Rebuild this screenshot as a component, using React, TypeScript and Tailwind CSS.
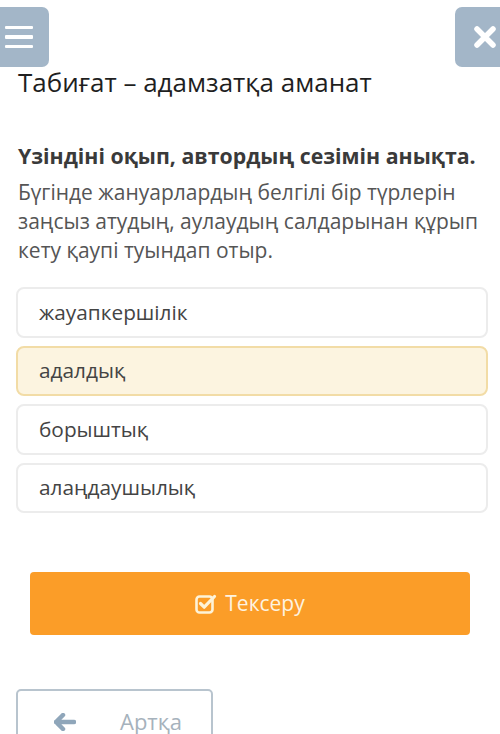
import React from "react";

export default function App() {
  const options = ["жауапкершілік", "адалдық", "борыштық", "алаңдаушылық"];
  return (
    <div className="relative w-[500px] h-[734px] overflow-hidden bg-white" style={{ fontFamily: '"Open Sans", "Noto Sans", sans-serif' }}>
      <div className="absolute left-[-8px] top-[7px] w-[57px] h-[60px] rounded-[7px] bg-[#a3b6c8] flex items-center justify-center">
        <div className="flex flex-col gap-[6px] ml-[-4px]">
          <div className="w-[28px] h-[3.5px] bg-white rounded-[1px]" />
          <div className="w-[28px] h-[3.5px] bg-white rounded-[1px]" />
          <div className="w-[28px] h-[3.5px] bg-white rounded-[1px]" />
        </div>
      </div>
      <div className="absolute left-[455px] top-[7px] w-[60px] h-[60px] rounded-[7px] bg-[#a3b6c8] flex items-center pl-[18px]">
        <svg width="24" height="24" viewBox="0 0 24 24">
          <path d="M4 4 L20 20 M20 4 L4 20" stroke="white" strokeWidth="5.5" strokeLinecap="round" />
        </svg>
      </div>

      <div className="pt-[64px] px-[18px]">
        <h1 className="text-[26px] leading-[36px] text-[#1f1f1f] font-normal whitespace-nowrap">Табиғат – адамзатқа аманат</h1>
        <p className="mt-[42px] text-[21.3px] leading-[28px] font-bold text-[#3a3a3a] whitespace-nowrap">Үзіндіні оқып, автордың сезімін анықта.</p>
        <p className="mt-[8px] text-[21px] leading-[29px] text-[#555] whitespace-nowrap">
          Бүгінде жануарлардың белгілі бір түрлерін
          <br />
          заңсыз атудың, аулаудың салдарынан құрып
          <br />
          кету қаупі туындап отыр.
        </p>
      </div>

      <div className="mt-[22px] mx-[16px] w-[472px] flex flex-col gap-[8px]">
        {options.map((o, i) => (
          <div
            key={o}
            className={
              i === 1
                ? "h-[50.5px] rounded-[8px] border-2 border-[#f2dca6] bg-[#fcf4e0] flex items-center pl-[21px] text-[20.8px] text-[#444]"
                : "h-[50.5px] rounded-[8px] border-2 border-[#ececec] bg-white flex items-center pl-[21px] text-[20.8px] text-[#444]"
            }
          >
            {o}
          </div>
        ))}
      </div>

      <div className="mt-[59px] mx-[30px] h-[63px] rounded-[4px] bg-[#fb9d28] flex items-center justify-center gap-[8px] text-white text-[21px]">
        <svg width="22" height="22" viewBox="0 0 22 22">
          <rect x="1.5" y="3.5" width="16" height="16" rx="3" fill="none" stroke="#fdf3d8" strokeWidth="2.6" />
          <path d="M5.5 10.5 L9.2 14.2 L19.5 3.5" fill="none" stroke="#fdf3d8" strokeWidth="3.2" strokeLinecap="round" strokeLinejoin="round" />
        </svg>
        <span className="text-[#fdf3e0]">Тексеру</span>
      </div>

      <div className="mt-[54px] ml-[16px] w-[197px] h-[64px] rounded-[5px] border-2 border-[#b8c4ce] flex items-start pt-[14px]">
        <svg className="ml-[36px] mt-[8px]" width="22" height="18" viewBox="0 0 22 18">
          <path d="M9 2 L2 9 L9 16 M2 9 L20 9" fill="none" stroke="#8fa6ba" strokeWidth="4.5" strokeLinecap="round" strokeLinejoin="round" />
        </svg>
        <span className="ml-[44px] text-[22px] leading-[32px] text-[#a6b2bc]">Артқа</span>
      </div>
    </div>
  );
}
